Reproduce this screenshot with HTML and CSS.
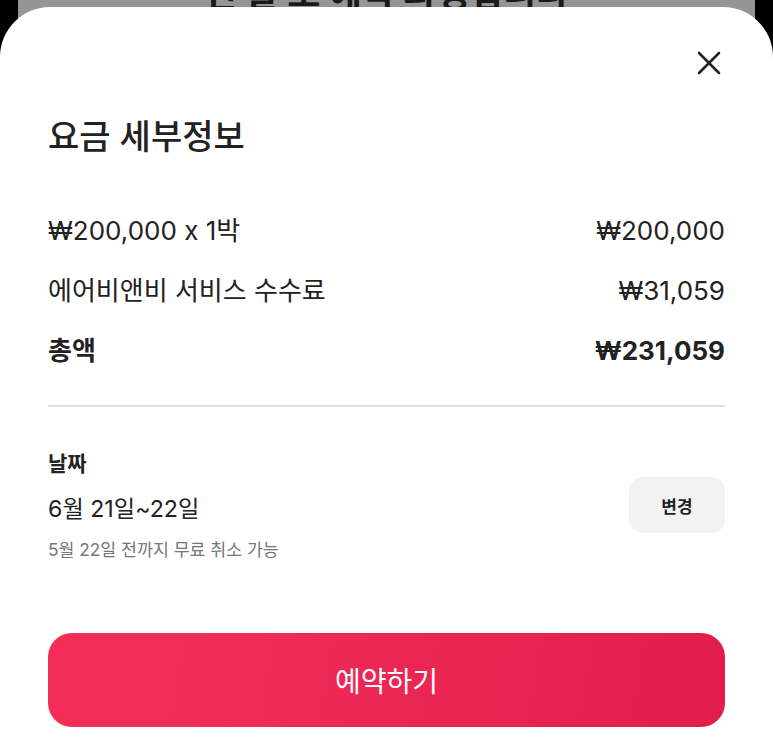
FILE: index.html
```html
<!DOCTYPE html>
<html lang="ko">
<head>
<meta charset="utf-8">
<link rel="stylesheet" href="styles.css">
</head>
<body>
<div class="screen">
  <div class="behind">
    <div class="behind-card"><p class="behind-text">전 날 소 예약 과정입니다</p></div>
  </div>
  <div class="sheet">
    <div class="sheet-top">
      <button class="close" aria-label="닫기">
        <svg width="26" height="26" viewBox="0 0 26 26"><path d="M3 3 L23 23 M23 3 L3 23" stroke="#222" stroke-width="2.6" stroke-linecap="round" fill="none"/></svg>
      </button>
    </div>
    <h1 class="title">요금 세부정보</h1>
    <div class="rows">
      <div class="row"><span>₩200,000 x 1박</span><span>₩200,000</span></div>
      <div class="row"><span>에어비앤비 서비스 수수료</span><span>₩31,059</span></div>
      <div class="row total"><span>총액</span><span>₩231,059</span></div>
    </div>
    <hr class="divider">
    <div class="dates">
      <div class="dates-info">
        <div class="dates-label">날짜</div>
        <div class="dates-value">6월 21일~22일</div>
        <div class="dates-note">5월 22일 전까지 무료 취소 가능</div>
      </div>
      <button class="change">변경</button>
    </div>
    <button class="reserve">예약하기</button>
  </div>
</div>
</body>
</html>
```
FILE: styles.css
```css
* { box-sizing: border-box; }
html, body { margin: 0; padding: 0; }
body {
  width: 773px;
  height: 748px;
  overflow: hidden;
  background: #000;
  font-family: "Inter", "Noto Sans CJK KR", "Noto Sans", sans-serif;
  font-feature-settings: "calt" 0;
  color: #222;
}
.screen {
  position: relative;
  width: 773px;
  height: 748px;
}
.behind {
  padding: 0 18px;
}
.behind-card {
  background: #959595;
  height: 60px;
  overflow: hidden;
}
.behind-text {
  margin: -26px 0 0;
  text-align: center;
  font-size: 36px;
  font-weight: 700;
  line-height: 40px;
  color: #1a1a1a;
}
.sheet {
  position: absolute;
  top: 7px;
  left: 0;
  right: 0;
  bottom: 0;
  background: #fff;
  border-radius: 50px 50px 0 0;
  padding: 40px 48px 0;
  display: flex;
  flex-direction: column;
}
.sheet-top {
  display: flex;
  justify-content: flex-end;
}
.close {
  width: 32px;
  height: 32px;
  padding: 0;
  border: 0;
  background: none;
  display: flex;
  align-items: center;
  justify-content: center;
}
.title {
  margin: 34px 0 0;
  font-size: 34px;
  line-height: 48px;
  font-weight: 500;
  color: #222;
}
.rows {
  margin-top: 52px;
  display: flex;
  flex-direction: column;
  gap: 24px;
}
.row {
  display: flex;
  justify-content: space-between;
  font-size: 26px;
  line-height: 36px;
  color: #222;
}
.row.total {
  font-weight: 700;
}
.divider {
  margin: 36px 0 0;
  border: 0;
  height: 2px;
  background: #dddddd;
}
.dates {
  margin-top: 41px;
  display: flex;
  justify-content: space-between;
  align-items: flex-start;
}
.dates-label {
  font-size: 21px;
  line-height: 32px;
  font-weight: 700;
}
.dates-value {
  margin-top: 11px;
  font-size: 23.2px;
  line-height: 36px;
}
.dates-note {
  margin-top: 11px;
  font-size: 17.3px;
  line-height: 24px;
  color: #777;
}
.change {
  margin-top: 29px;
  width: 96px;
  height: 56px;
  border: 0;
  border-radius: 14px;
  background: #f2f2f2;
  font-family: inherit;
  font-size: 17px;
  font-weight: 600;
  color: #222;
}
.reserve {
  margin-top: 71px;
  height: 94px;
  border: 0;
  border-radius: 24px;
  background: linear-gradient(100deg, #f22e58 0%, #ef2a56 35%, #e21d4c 100%);
  color: #fff;
  font-family: inherit;
  font-size: 28px;
  font-weight: 400;
}
```
